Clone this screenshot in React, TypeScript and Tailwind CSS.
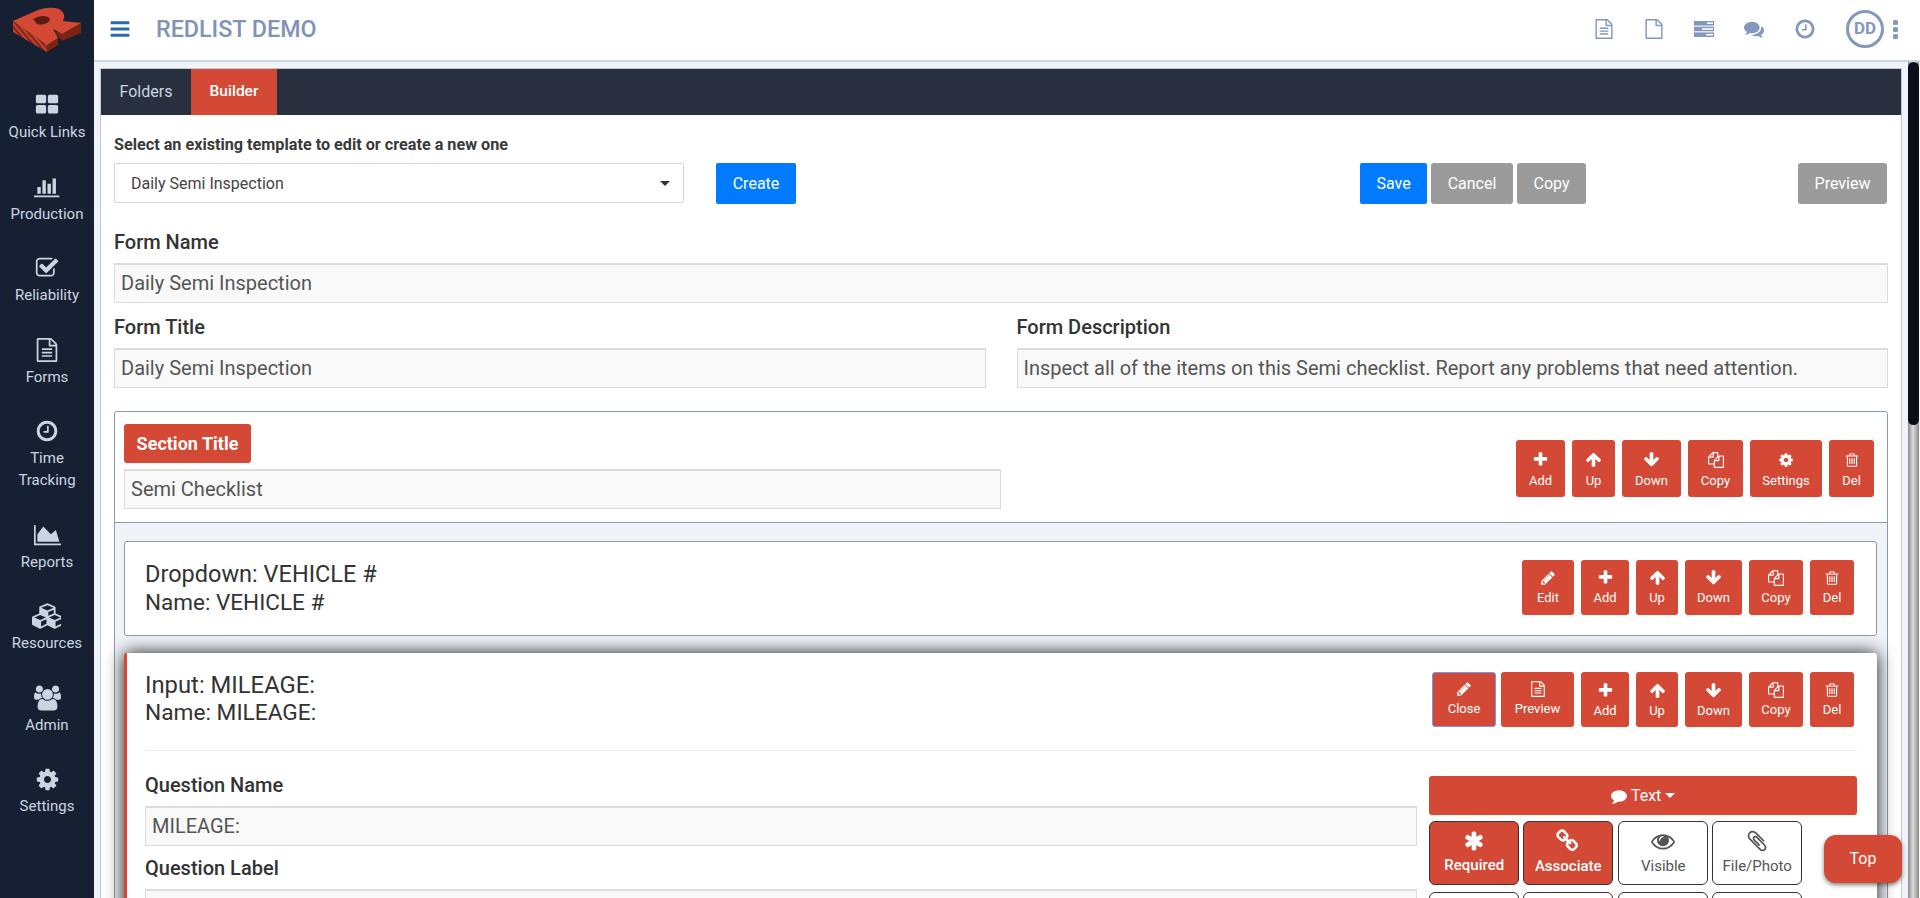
import React from "react";

const P = ({ d, vb = "0 0 1792 1792", className = "" }: { d: string; vb?: string; className?: string }) => (
  <svg viewBox={vb} fill="currentColor" className={className}><path d={d} /></svg>
);

const D = {
  th: "M832 1024v384q0 52-38 90t-90 38h-512q-52 0-90-38t-38-90v-384q0-52 38-90t90-38h512q52 0 90 38t38 90zm0-768v384q0 52-38 90t-90 38h-512q-52 0-90-38t-38-90v-384q0-52 38-90t90-38h512q52 0 90 38t38 90zm896 768v384q0 52-38 90t-90 38h-512q-52 0-90-38t-38-90v-384q0-52 38-90t90-38h512q52 0 90 38t38 90zm0-768v384q0 52-38 90t-90 38h-512q-52 0-90-38t-38-90v-384q0-52 38-90t90-38h512q52 0 90 38t38 90z",
  bar: "M512 896v512h-256v-512h256zm384-512v1024h-256v-1024h256zm1024 1152v128h-2048v-1536h128v1408h1920zm-640-896v768h-256v-768h256zm384-384v1152h-256v-1152h256z",
  check: "M1472 930v318q0 119-84.5 203.5t-203.5 84.5h-832q-119 0-203.5-84.5t-84.5-203.5v-832q0-119 84.5-203.5t203.5-84.5h832q63 0 117 25 15 7 18 23 3 17-9 29l-49 49q-10 10-23 10-3 0-9-2-23-6-45-6h-832q-66 0-113 47t-47 113v832q0 66 47 113t113 47h832q66 0 113-47t47-113v-254q0-13 9-22l64-64q10-10 23-10 6 0 12 3 20 8 20 29zm231-489l-814 814q-24 24-57 24t-57-24l-430-430q-24-24-24-57t24-57l110-110q24-24 57-24t57 24l263 263 647-647q24-24 57-24t57 24l110 110q24 24 24 57t-24 57z",
  fileText: "M1596 380q28 28 48 76t20 88v1152q0 40-28 68t-68 28h-1344q-40 0-68-28t-28-68v-1600q0-40 28-68t68-28h896q40 0 88 20t76 48zm-444-244v376h376q-10-29-22-41l-313-313q-12-12-41-22zm384 1528v-1024h-416q-40 0-68-28t-28-68v-416h-768v1536h1280zm-1024-864q0-14 9-23t23-9h704q14 0 23 9t9 23v64q0 14-9 23t-23 9h-704q-14 0-23-9t-9-23v-64zm736 224q14 0 23 9t9 23v64q0 14-9 23t-23 9h-704q-14 0-23-9t-9-23v-64q0-14 9-23t23-9h704zm0 256q14 0 23 9t9 23v64q0 14-9 23t-23 9h-704q-14 0-23-9t-9-23v-64q0-14 9-23t23-9h704z",
  file: "M1596 380q28 28 48 76t20 88v1152q0 40-28 68t-68 28h-1344q-40 0-68-28t-28-68v-1600q0-40 28-68t68-28h896q40 0 88 20t76 48zm-444-244v376h376q-10-29-22-41l-313-313q-12-12-41-22zm384 1528v-1024h-416q-40 0-68-28t-28-68v-416h-768v1536h1280z",
  clock: "M1024 544v448q0 14-9 23t-23 9h-320q-14 0-23-9t-9-23v-64q0-14 9-23t23-9h224v-352q0-14 9-23t23-9h64q14 0 23 9t9 23zm416 352q0-148-73-273t-198-198-273-73-273 73-198 198-73 273 73 273 198 198 273 73 273-73 198-198 73-273zm224 0q0 209-103 385.5t-279.5 279.5-385.5 103-385.5-103-279.5-279.5-103-385.5 103-385.5 279.5-279.5 385.5-103 385.5 103 279.5 279.5 103 385.5z",
  area: "M2048 1536v128h-2048v-1536h128v1408h1920zm-384-1024l256 896h-1664v-576l448-576 576 576z",
  copy: "M1696 384q40 0 68 28t28 68v1216q0 40-28 68t-68 28h-960q-40 0-68-28t-28-68v-288h-544q-40 0-68-28t-28-68v-672q0-40 20-88t48-76l408-408q28-28 76-48t88-20h416q40 0 68 28t28 68v328q68-40 128-40h416zm-544 213l-299 299h299v-299zm-640-384l-299 299h299v-299zm196 647l316-316v-416h-384v416q0 40-28 68t-68 28h-416v640h512v-256q0-40 20-88t48-76zm956 804v-1152h-384v416q0 40-28 68t-68 28h-416v640h896z",
  trash: "M704 736v576q0 14-9 23t-23 9h-64q-14 0-23-9t-9-23v-576q0-14 9-23t23-9h64q14 0 23 9t9 23zm256 0v576q0 14-9 23t-23 9h-64q-14 0-23-9t-9-23v-576q0-14 9-23t23-9h64q14 0 23 9t9 23zm256 0v576q0 14-9 23t-23 9h-64q-14 0-23-9t-9-23v-576q0-14 9-23t23-9h64q14 0 23 9t9 23zm128 724v-948h-896v948q0 22 7 40.5t14.5 27 10.5 8.5h832q3 0 10.5-8.5t14.5-27 7-40.5zm-672-1076h448l-48-117q-7-9-17-11h-317q-10 2-17 11zm928 32v64q0 14-9 23t-23 9h-96v948q0 83-47 143.5t-113 60.5h-832q-66 0-113-58.5t-47-141.5v-952h-96q-14 0-23-9t-9-23v-64q0-14 9-23t23-9h309l70-167q15-37 54-63t79-26h320q40 0 79 26t54 63l70 167h309q14 0 23 9t9 23z",
  users: "M593 896q-162 5-265 128h-134q-82 0-138-40.5t-56-118.5q0-353 124-353 6 0 43.5 21t97.5 42.5 119 21.5q67 0 133-23-5 37-5 66 0 139 81 256zm1071 637q0 120-73 189.5t-194 69.5h-874q-121 0-194-69.5t-73-189.5q0-53 3.5-103.5t14-109 26.5-108.5 43-97.5 62-81 85.5-53.5 111.5-20q10 0 43 21.5t73 48 107 48 135 21.5 135-21.5 107-48 73-48 43-21.5q61 0 111.5 20t85.5 53.5 62 81 43 97.5 26.5 108.5 14 109 3.5 103.5zm-1024-1277q0 106-75 181t-181 75-181-75-75-181 75-181 181-75 181 75 75 181zm704 384q0 159-112.5 271.5t-271.5 112.5-271.5-112.5-112.5-271.5 112.5-271.5 271.5-112.5 271.5 112.5 112.5 271.5zm576 225q0 78-56 118.5t-138 40.5h-134q-103-123-265-128 81-117 81-256 0-29-5-66 66 23 133 23 59 0 119-21.5t97.5-42.5 43.5-21q124 0 124 353zm-128-609q0 106-75 181t-181 75-181-75-75-181 75-181 181-75 181 75 75 181z",
  cog: "M1152 896q0-106-75-181t-181-75-181 75-75 181 75 181 181 75 181-75 75-181zm512-109v222q0 12-8 23t-20 13l-185 28q-19 54-39 91 35 50 107 138 10 12 10 25t-9 23q-27 37-99 108t-94 71q-12 0-26-9l-138-108q-44 23-91 38-16 136-29 186-7 28-36 28h-222q-14 0-24.5-8.5t-11.5-21.5l-28-184q-49-16-90-37l-141 107q-10 9-25 9-14 0-25-11-126-114-165-168-7-10-7-23 0-12 8-23 15-21 51-66.5t54-70.5q-27-50-41-99l-183-27q-13-2-21-12.5t-8-23.5v-222q0-12 8-23t19-13l186-28q14-46 39-92-40-57-107-138-10-12-10-24 0-10 9-23 26-36 98.5-107.5t94.5-71.5q13 0 26 10l138 107q44-23 91-38 16-136 29-186 7-28 36-28h222q14 0 24.5 8.5t11.5 21.5l28 184q49 16 90 37l142-107q9-9 24-9 13 0 25 10 129 119 165 170 7 8 7 22 0 12-8 23-15 21-51 66.5t-54 70.5q26 50 41 98l183 28q13 2 21 12.5t8 23.5z",
  cubes: "M640 1632l384-192v-314l-384 164v342zm-64-454l404-173-404-173-404 173zm1088 454l384-192v-314l-384 164v342zm-64-454l404-173-404-173-404 173zm-448-293l384-165v-266l-384 164v267zm-64-379l441-189-441-189-441 189zm1088 518v416q0 36-19 67t-52 47l-448 224q-25 14-57 14t-57-14l-448-224q-4-2-7-4-2 2-7 4l-448 224q-25 14-57 14t-57-14l-448-224q-33-16-52-47t-19-67v-416q0-38 21.5-70t56.5-48l434-186v-400q0-38 21.5-70t56.5-48l448-192q23-10 50-10t50 10l448 192q35 16 56.5 48t21.5 70v400l434 186q36 16 57 48t21 70z",
  plus: "M1600 736v192q0 40-28 68t-68 28h-416v416q0 40-28 68t-68 28h-192q-40 0-68-28t-28-68v-416h-416q-40 0-68-28t-28-68v-192q0-40 28-68t68-28h416v-416q0-40 28-68t68-28h192q40 0 68 28t28 68v416h416q40 0 68 28t28 68z",
  up: "M1675 971q0 51-37 90l-75 75q-38 38-91 38-54 0-90-38l-294-293v704q0 52-37.5 84.5t-90.5 32.5h-128q-53 0-90.5-32.5t-37.5-84.5v-704l-294 293q-36 38-90 38t-90-38l-75-75q-38-38-38-90 0-53 38-91l651-651q35-37 90-37 54 0 91 37l651 651q37 39 37 91z",
  down: "M1675 832q0 53-37 90l-651 652q-39 37-91 37-53 0-90-37l-651-652q-38-36-38-90 0-53 38-91l74-75q39-37 91-37 53 0 90 37l294 294v-704q0-52 38-90t90-38h128q52 0 90 38t38 90v704l294-294q37-37 90-37 52 0 91 37l75 75q37 39 37 91z",
  pencil: "M491 1536l91-91-235-235-91 91v107h128v128h107zm523-928q0-22-22-22-10 0-17 7l-542 542q-7 7-7 17 0 22 22 22 10 0 17-7l542-542q7-7 7-17zm-54-192l416 416-832 832h-416v-416zm683 96q0 53-37 90l-166 166-416-416 166-165q36-38 90-38 53 0 91 38l235 234q37 39 37 91z",
  asterisk: "M1546 1050q46 26 59.5 77.5t-12.5 97.5l-64 110q-26 46-77.5 59.5t-97.5-12.5l-266-153v307q0 52-38 90t-90 38h-128q-52 0-90-38t-38-90v-307l-266 153q-46 26-97.5 12.5t-77.5-59.5l-64-110q-26-46-12.5-97.5t59.5-77.5l266-154-266-154q-46-26-59.5-77.5t12.5-97.5l64-110q26-46 77.5-59.5t97.5 12.5l266 153v-307q0-52 38-90t90-38h128q52 0 90 38t38 90v307l266-153q46-26 97.5-12.5t77.5 59.5l64 110q26 46 12.5 97.5t-59.5 77.5l-266 154z",
  link: "M1456 1216q0-40-28-68l-208-208q-28-28-68-28-42 0-72 32 3 3 19 18.5t21.5 21.5 15 19 13 25.5 3.5 27.5q0 40-28 68t-68 28q-15 0-27.5-3.5t-25.5-13-19-15-21.5-21.5-18.5-19q-33 31-33 73 0 40 28 68l206 207q27 27 68 27 40 0 68-26l147-146q28-28 28-67zm-703-705q0-40-28-68l-206-207q-28-28-68-28-39 0-68 27l-147 146q-28 28-28 67 0 40 28 68l208 208q27 27 68 27 42 0 72-31-3-3-19-18.5t-21.5-21.5-15-19-13-25.5-3.5-27.5q0-40 28-68t68-28q15 0 27.5 3.5t25.5 13 19 15 21.5 21.5 18.5 19q33-31 33-73zm895 705q0 120-85 203l-147 146q-83 83-203 83-121 0-204-85l-206-207q-83-83-83-203 0-123 88-209l-88-88q-86 88-208 88-120 0-204-84l-208-208q-84-84-84-204t85-203l147-146q83-83 203-83 121 0 204 85l206 207q83 83 83 203 0 123-88 209l88 88q86-88 208-88 120 0 204 84l208 208q84 84 84 204z",
  eye: "M1664 960q-152-236-381-353 61 104 61 225 0 185-131.5 316.5t-316.5 131.5-316.5-131.5-131.5-316.5q0-121 61-225-229 117-381 353 133 205 333.5 326.5t434.5 121.5 434.5-121.5 333.5-326.5zm-720-384q0-20-14-34t-34-14q-125 0-214.5 89.5t-89.5 214.5q0 20 14 34t34 14 34-14 14-34q0-86 61-147t147-61q20 0 34-14t14-34zm848 384q0 34-20 69-140 230-376.5 368.5t-499.5 138.5-499.5-139-376.5-368q-20-35-20-69t20-69q140-229 376.5-368t499.5-139 499.5 139 376.5 368q20 35 20 69z",
  clip: "M1596 1385q0 117-79 196t-196 79q-135 0-235-100l-777-776q-113-115-113-271 0-159 110-270t269-111q158 0 273 113l605 606q10 10 10 22 0 16-30.5 46.5t-46.5 30.5q-13 0-23-10l-606-607q-79-77-181-77-106 0-179 75t-73 181q0 105 76 181l776 777q63 63 145 63 64 0 106-42t42-106q0-82-63-145l-581-581q-26-24-60-24-29 0-48 19t-19 48q0 32 25 59l410 410q10 10 10 22 0 16-31 47t-47 31q-12 0-22-10l-410-410q-63-61-63-149 0-82 57-139t139-57q88 0 149 63l581 581q100 98 100 235z",
  comment: "M1792 896q0 174-120 321.5t-326 233-450 85.5q-70 0-145-8-198 175-460 242-49 14-114 22-17 2-30.5-9t-17.5-29v-1q-3-4-.5-12t2-10 4.5-9.5l6-9 7-8.5 8-9q7-8 31-34.5t34.5-38 31-39.5 32.5-51 27-59 26-76q-157-89-247.5-220t-90.5-281q0-130 71-248.5t191-204.5 286-136.5 348-50.5q244 0 450 85.5t326 233 120 321.5z",
  comments: "M1408 768q0 139-94 257t-256.5 186.5-353.5 68.5q-86 0-176-16-124 88-278 128-36 9-86 16h-3q-11 0-20.5-8t-11.5-21q-1-3-1-6.5t.5-6.5 2-6l2.5-5 3.5-5.5 4-5 4.5-5 4-4.5q5-6 23-25t26-29.5 22.5-29 25-38.5 20.5-44q-124-72-195-177t-71-224q0-139 94-257t256.5-186.5 353.5-68.5 353.5 68.5 256.5 186.5 94 257zm384 256q0 120-71 224.5t-195 176.5q10 24 20.5 44t25 38.5 22.5 29 26 29.5 23 25q1 1 4 4.5t4.5 5 4 5 3.5 5.5l2.5 5 2 6 .5 6.5-1 6.5q-3 14-13 22t-22 7q-50-7-86-16-154-40-278-128-90 16-176 16-271 0-472-132 58 4 88 4 161 0 309-45t264-129q125-92 192-212t67-254q0-77-23-152 129 71 204 178t75 230z",
};

const Logo = () => (
  <svg viewBox="0 0 94 60" className="w-[94px] h-[60px] block">
    <defs>
      <pattern id="h" width="4" height="4" patternUnits="userSpaceOnUse" patternTransform="rotate(-40)">
        <rect width="4" height="4" fill="#c8412c" />
        <rect width="1.6" height="4" fill="#6e2112" />
      </pattern>
    </defs>
    <path d="M13 21 L47 45 L47 52 L13 32 Z" fill="url(#h)" />
    <path d="M47 45 L58 38 L58 45 L47 52 Z" fill="#7a2512" />
    <path d="M62 34 L81 23 L81 33 L62 41 L54 31 Z" fill="#7a2512" />
    <path d="M13 21 L38 10 Q50 6 59 9 Q67 13 63 21 L81 23 L62 34 L53 29 L58 38 L47 45 Z" fill="#d44936" />
    <path d="M33 19 Q41 14 48 17 Q52 20 47 23 Q41 26 37 24 Z" fill="#5e1c10" />
  </svg>
);

const navItems = [
  { label: <>Quick Links</>, icon: <P d={D.th} className="w-[24px] h-[24px]" /> },
  { label: <>Production</>, icon: <P d={D.bar} vb="0 0 2048 1792" className="w-[27px] h-[24px]" /> },
  { label: <>Reliability</>, icon: <P d={D.check} className="w-[24px] h-[24px]" /> },
  { label: <>Forms</>, icon: <P d={D.fileText} className="w-[24px] h-[24px]" /> },
  { label: <>Time<br />Tracking</>, icon: <P d={D.clock} className="w-[24px] h-[24px]" /> },
  { label: <>Reports</>, icon: <P d={D.area} vb="0 0 2048 1792" className="w-[27px] h-[24px]" /> },
  { label: <>Resources</>, icon: <P d={D.cubes} vb="0 0 2048 1792" className="w-[29px] h-[26px]" /> },
  { label: <>Admin</>, icon: <P d={D.users} vb="0 0 1920 1792" className="w-[27px] h-[26px]" /> },
  { label: <>Settings</>, icon: <P d={D.cog} className="w-[25px] h-[25px]" /> },
];

const Sidebar = () => (
  <aside className="w-[94px] shrink-0 bg-[#172033] flex flex-col items-center">
    <div className="h-[93px] w-full"><Logo /></div>
    {navItems.map((n, i) => (
      <div key={i} className="flex flex-col items-center pb-[31.5px] text-[#cbd5e0]">
        <div className="h-[24px] flex items-center justify-center">{n.icon}</div>
        <div className="mt-[4px] text-[15px] leading-[22px] text-center">{n.label}</div>
      </div>
    ))}
  </aside>
);

const Header = () => (
  <header className="h-[62px] shrink-0 bg-white border-b-2 border-[#cbd5e0] flex items-center pl-[15px] pr-[22px] pb-[2px]">
    <P d="M1664 1344v128q0 26-19 45t-45 19h-1408q-26 0-45-19t-19-45v-128q0-26 19-45t45-19h1408q26 0 45 19t19 45zm0-512v128q0 26-19 45t-45 19h-1408q-26 0-45-19t-19-45v-128q0-26 19-45t45-19h1408q26 0 45 19t19 45zm0-512v128q0 26-19 45t-45 19h-1408q-26 0-45-19t-19-45v-128q0-26 19-45t45-19h1408q26 0 45 19t19 45z" className="w-[22px] h-[22px] text-[#2b6cb0]" />
    <div className="ml-[25px] text-[23.3px] font-medium text-[#7f93b8]">REDLIST DEMO</div>
    <div className="ml-auto flex items-center text-[#8497bc]">
      <P d={D.fileText} className="w-[20px] h-[20px]" />
      <P d={D.file} className="w-[20px] h-[20px] ml-[30px]" />
      <svg viewBox="0 0 20 16" className="w-[20px] h-[16px] ml-[30px]">
        <rect y="0" width="20" height="4.6" fill="currentColor" /><rect x="13" y="1.4" width="6" height="1.6" fill="#fff" />
        <rect y="5.7" width="20" height="4.6" fill="currentColor" /><rect x="8" y="7.2" width="11" height="1.6" fill="#fff" />
        <rect y="11.4" width="20" height="4.6" fill="currentColor" /><rect x="12" y="12.9" width="7" height="1.6" fill="#fff" />
      </svg>
      <P d={D.comments} className="w-[20px] h-[20px] ml-[30px]" />
      <P d={D.clock} className="w-[22px] h-[22px] ml-[30px]" />
      <div className="ml-[30px] w-[38px] h-[38px] rounded-full border-[3px] border-[#8497bc] flex items-center justify-center text-[17px] font-bold">DD</div>
      <div className="ml-[9px] flex flex-col gap-[2px]">
        <div className="w-[5px] h-[5px] rounded-[1.5px] bg-[#8497bc]" />
        <div className="w-[5px] h-[5px] rounded-[1.5px] bg-[#8497bc]" />
        <div className="w-[5px] h-[5px] rounded-[1.5px] bg-[#8497bc]" />
      </div>
    </div>
  </header>
);

const Field = ({ value, className = "" }: { value: string; className?: string }) => (
  <input readOnly value={value} className={"block w-full h-[40px] bg-[#f9f9f9] border border-[#dcdcdc] border-t-2 px-[6px] pb-[2px] text-[20px] text-[#555] outline-none " + className} />
);

const Gray = ({ children, className = "" }: { children: React.ReactNode; className?: string }) => (
  <button className={"h-[41px] shrink-0 bg-[#9b9b9b] rounded-[3px] text-white text-[16px] " + className}>{children}</button>
);

const ico = "w-[16px] h-[16px]";
const Act = ({ icon, label, w, h = "h-[55px] gap-[5px]", cls = "" }: { icon: React.ReactNode; label: string; w: string; h?: string; cls?: string }) => (
  <button className={"bg-[#d44936] rounded-[3px] text-white flex flex-col items-center justify-center text-[13px] leading-[14px] " + w + " " + h + " " + cls}>
    {icon}
    <span>{label}</span>
  </button>
);

const I = {
  add: <P d={D.plus} className="w-[17px] h-[17px]" />,
  up: <P d={D.up} className="w-[17px] h-[17px]" />,
  down: <P d={D.down} className="w-[17px] h-[17px]" />,
  copy: <P d={D.copy} className={ico} />,
  del: <P d={D.trash} className={ico} />,
  edit: <P d={D.pencil} className={ico} />,
  gear: <P d={D.cog} className={ico} />,
  file: <P d={D.fileText} className={ico} />,
};

const Toggle = ({ icon, label, on, cls = "" }: { icon: React.ReactNode; label: string; on?: boolean; cls?: string }) => (
  <button className={"w-[90px] h-[64px] rounded-[6px] border border-[#333] flex flex-col items-center justify-center gap-[4px] pb-[3px] text-[15px] leading-[18px] " + (on ? "bg-[#d44936] text-white font-medium " : "bg-white text-[#555] ") + cls}>
    {icon}
    <span>{label}</span>
  </button>
);

const Blank = ({ cls = "" }: { cls?: string }) => <div className={"w-[90px] h-[64px] rounded-[6px] border border-[#333] bg-white " + cls} />;

const Label = ({ children, className = "" }: { children: React.ReactNode; className?: string }) => (
  <div className={"text-[20px] leading-[26px] font-medium " + className}>{children}</div>
);

export default function App() {
  return (
    <div className="w-[1920px] h-[898px] overflow-hidden flex font-['Roboto',sans-serif] text-[#333] relative bg-white">
      <Sidebar />
      <div className="flex-1 min-w-0 flex flex-col">
        <Header />
        <div className="flex-1 min-h-0 flex bg-[#f0f4f8]">
          <main className="flex-1 min-w-0 overflow-hidden pl-[6px] pt-[6px]">
            <div className="bg-white border border-[#c4c8cc] border-b-0 h-[900px]">
              <div className="h-[46px] bg-[#282f3f] flex text-[16px]">
                <div className="w-[90px] flex items-center justify-center text-[#cbd5e0]">Folders</div>
                <div className="w-[86px] flex items-center justify-center bg-[#d44936] text-white text-[15.5px] font-medium">Builder</div>
              </div>
              <div className="px-[13px] pt-[20px]">
                <div className="text-[16.2px] leading-[20px] font-bold text-[#3a3a3a] mb-[8px]">Select an existing template to edit or create a new one</div>
                <div className="flex items-start">
                  <div className="w-[570px] shrink-0 h-[40px] border border-[#d4d8dc] rounded-[2px] pl-[16px] pr-[13px] flex items-center justify-between text-[16px] text-[#444]">
                    <span className="pt-[1px]">Daily Semi Inspection</span>
                    <span className="w-0 h-0 border-x-[5px] border-x-transparent border-t-[5px] border-t-[#333]" />
                  </div>
                  <button className="ml-[32px] shrink-0 w-[80px] h-[41px] bg-[#007bff] rounded-[2px] text-white text-[16px]">Create</button>
                  <button className="ml-[564px] shrink-0 w-[67px] h-[41px] bg-[#007bff] rounded-[2px] text-white text-[16px]">Save</button>
                  <Gray className="ml-[4px] w-[82px]">Cancel</Gray>
                  <Gray className="ml-[4px] w-[69px]">Copy</Gray>
                  <Gray className="ml-[212px] w-[89px]">Preview</Gray>
                </div>
                <Label className="mt-[25px] mb-[8px]">Form Name</Label>
                <Field value="Daily Semi Inspection" />
                <div className="grid grid-cols-2 gap-x-[31px] mt-[11px]">
                  <div>
                    <Label className="mb-[8px]">Form Title</Label>
                    <Field value="Daily Semi Inspection" />
                  </div>
                  <div>
                    <Label className="mb-[8px]">Form Description</Label>
                    <Field value="Inspect all of the items on this Semi checklist. Report any problems that need attention." />
                  </div>
                </div>
                <section className="mt-[23px] border border-[#8a9bb0] rounded-[3px]">
                  <div className="flex items-center justify-between pl-[9px] pr-[13px] pt-[12px] pb-[13px] border-b border-[#8a9bb0]">
                    <div className="w-[877px]">
                      <div className="w-[127px] h-[39px] bg-[#d44936] rounded-[3px] flex items-center justify-center text-white text-[18px] font-bold">Section Title</div>
                      <Field value="Semi Checklist" className="mt-[6px]" />
                    </div>
                    <div className="flex gap-[7px] mt-[3px]">
                      <Act h="h-[57px] gap-[6px] pt-[3px]" w="w-[49px]" icon={I.add} label="Add" />
                      <Act h="h-[57px] gap-[6px] pt-[3px]" w="w-[43px]" icon={I.up} label="Up" />
                      <Act h="h-[57px] gap-[6px] pt-[3px]" w="w-[59px]" icon={I.down} label="Down" />
                      <Act h="h-[57px] gap-[6px] pt-[3px]" w="w-[55px]" icon={I.copy} label="Copy" />
                      <Act h="h-[57px] gap-[6px] pt-[3px]" w="w-[72px]" icon={I.gear} label="Settings" />
                      <Act h="h-[57px] gap-[6px] pt-[3px]" w="w-[45px]" icon={I.del} label="Del" />
                    </div>
                  </div>
                  <div className="bg-[#f0f4f8] pl-[9px] pr-[10px] pt-[18px] h-[500px]">
                    <div className="h-[95px] bg-white border border-[#8a9bb0] rounded-[3px] flex items-center justify-between pl-[20px] pr-[22px]">
                      <div className="leading-[28px] text-[#333] pb-[2px]">
                        <div className="text-[23.5px]">Dropdown: VEHICLE #</div>
                        <div className="text-[22.5px]">Name: VEHICLE #</div>
                      </div>
                      <div className="flex gap-[7px] mt-[-3px]">
                        <Act w="w-[52px]" icon={I.edit} label="Edit" />
                        <Act w="w-[48px]" icon={I.add} label="Add" />
                        <Act w="w-[42px]" icon={I.up} label="Up" />
                        <Act w="w-[57px]" icon={I.down} label="Down" />
                        <Act w="w-[54px]" icon={I.copy} label="Copy" />
                        <Act w="w-[44px]" icon={I.del} label="Del" />
                      </div>
                    </div>
                    <div className="mt-[17px] h-[400px] bg-white border-l-[3px] border-[#d44936] rounded-[3px] shadow-[0_0_18px_rgba(0,0,0,0.9)] pl-[18px] pr-[20px] pt-[19px]">
                      <div className="flex items-start justify-between">
                        <div className="leading-[27px]">
                          <div className="text-[23.8px]">Input: MILEAGE:</div>
                          <div className="text-[22.7px]">Name: MILEAGE:</div>
                        </div>
                        <div className="flex gap-[7px] mr-[3px]">
                          <Act w="w-[64px]" icon={I.edit} label="Close" cls="border-[1.5px] border-[#6a9cf5] mr-[-2px] pb-[2px]" />
                          <Act w="w-[73px]" icon={I.file} label="Preview" cls="pb-[2px]" />
                          <Act w="w-[48px]" icon={I.add} label="Add" />
                          <Act w="w-[42px]" icon={I.up} label="Up" />
                          <Act w="w-[57px]" icon={I.down} label="Down" />
                          <Act w="w-[54px]" icon={I.copy} label="Copy" />
                          <Act w="w-[44px]" icon={I.del} label="Del" />
                        </div>
                      </div>
                      <div className="mt-[23px] border-t border-[#eeeeee]" />
                      <div className="flex mt-[25px] gap-[12px]">
                        <div className="w-[1273px]">
                          <Label className="mt-[-4px] mb-[8px]">Question Name</Label>
                          <Field value="MILEAGE:" />
                          <Label className="mt-[9px] mb-[8px]">Question Label</Label>
                          <Field value="" />
                        </div>
                        <div className="w-[428px]">
                          <div className="h-[39px] bg-[#d44936] rounded-[3px] text-white flex items-center justify-center gap-[4px] text-[16px]">
                            <P d={D.comment} className="w-[16px] h-[16px]" />
                            <span>Text</span>
                            <span className="w-0 h-0 border-x-[5px] border-x-transparent border-t-[5px] border-t-white" />
                          </div>
                          <div className="mt-[6px] flex gap-[4px]">
                            <Toggle on icon={<P d={D.asterisk} className="w-[22px] h-[22px]" />} label="Required" />
                            <Toggle on icon={<P d={D.link} className="w-[24px] h-[24px]" />} label="Associate" />
                            <Toggle cls="ml-[1px]" icon={<P d={D.eye} className="w-[24px] h-[24px]" />} label="Visible" />
                            <Toggle icon={<P d={D.clip} className="w-[24px] h-[24px]" />} label="File/Photo" />
                          </div>
                          <div className="mt-[7px] flex gap-[4px]">
                            <Blank /><Blank /><Blank cls="ml-[1px]" /><Blank />
                          </div>
                        </div>
                      </div>
                    </div>
                  </div>
                </section>
              </div>
            </div>
          </main>
          <div className="w-[18px] shrink-0 flex">
            <div className="w-[11px] ml-[6px] h-full bg-[linear-gradient(90deg,#888,#ddd_45%,#888)]">
              <div className="h-[363px] bg-[#0b0f17] rounded-[6px]" />
            </div>
            <div className="w-[1px] bg-white" />
          </div>
        </div>
      </div>
      <button className="absolute left-[1824px] top-[835px] w-[78px] h-[48px] bg-[#d44936] rounded-[12px] text-white text-[16px] shadow-[0_2px_4px_rgba(0,0,0,0.5)]">Top</button>
    </div>
  );
}
